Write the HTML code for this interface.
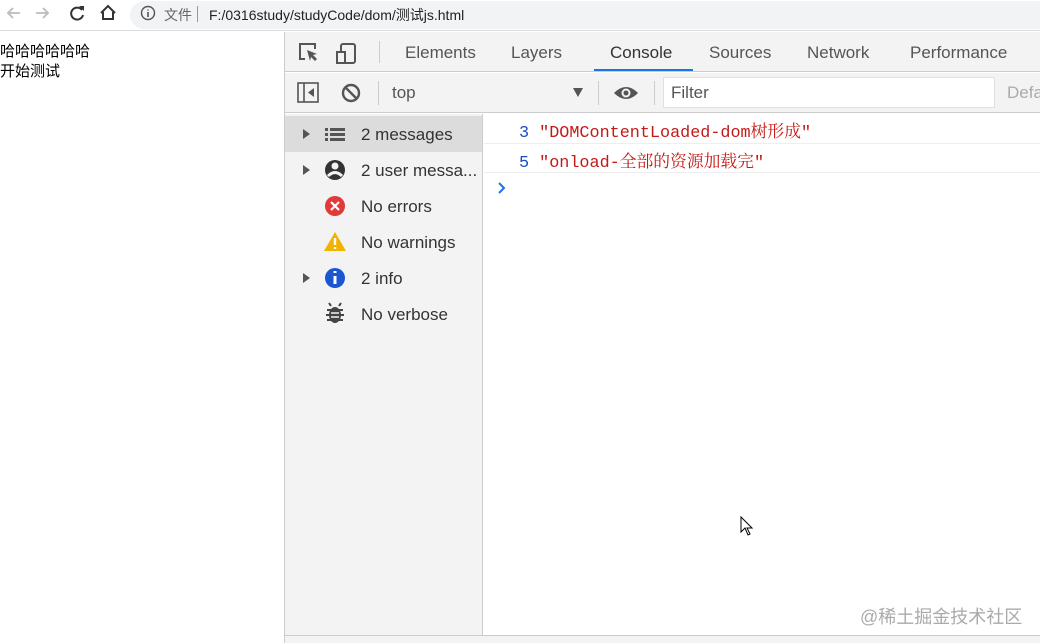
<!DOCTYPE html>
<html><head><meta charset="utf-8"><style>
*{margin:0;padding:0;box-sizing:border-box}
body{width:1040px;height:643px;overflow:hidden;background:#fff;font-family:"Liberation Sans","Noto Sans CJK SC",sans-serif;position:relative}
.a{position:absolute}
.t{font-size:17px;color:#333;white-space:nowrap}
.m{font-family:'Liberation Mono','Noto Serif CJK SC',monospace;font-size:16.8px;color:#c41a16;white-space:nowrap}
</style></head><body>
<div class="a" style="left:0;top:0;width:1040px;height:31px;background:#fff;border-bottom:1px solid #dadce0"></div>
<div class="a" style="left:130px;top:1px;width:910px;height:28px;background:#f1f3f4;border-radius:14px 0 0 14px"></div>
<svg class="a" style="left:0;top:0" width="130" height="30">
<path d="M20 13H8M13 8l-5 5 5 5" stroke="#bbb" stroke-width="1.8" fill="none"/>
<path d="M36 13h12M43 8l5 5-5 5" stroke="#bbb" stroke-width="1.8" fill="none"/>
<path d="M82 10a6 6 0 1 0 1 5" stroke="#333" stroke-width="2" fill="none"/><path d="M79 6h5v5z" fill="#333"/>
<path d="M101 13l7-7 7 7M103 12v7h10v-7" stroke="#333" stroke-width="2" fill="none"/>
</svg>
<svg class="a" style="left:140px;top:5px" width="16" height="16"><circle cx="8" cy="8" r="6.5" stroke="#555" stroke-width="1.4" fill="none"/><path d="M8 7v5M8 4.5v1" stroke="#555" stroke-width="1.6"/></svg>
<div class="a" style="left:164px;top:5px;font-size:14px;color:#666">文件</div>
<div class="a" style="left:197px;top:6px;width:1px;height:16px;background:#999"></div>
<div class="a" style="left:209px;top:5px;font-size:14px;color:#222">F:/0316study/studyCode/dom/测试js.html</div>
<div class="a" style="left:0;top:42px;font-size:15px;color:#000;line-height:20px">哈哈哈哈哈哈<br>开始测试</div>
<div class="a" style="left:284px;top:32px;width:756px;height:611px;background:#fff;border-left:1px solid #ccc"></div>
<div class="a" style="left:285px;top:32px;width:755px;height:40px;background:#f3f3f3;border-bottom:1px solid #ccc"></div>
<svg class="a" style="left:296px;top:40px" width="70" height="26">
<path d="M9 19H4V4h15v5" stroke="#555" stroke-width="2" fill="none"/><path d="M11 10l10 4-4 1 4 4-2 2-4-4-1 4z" fill="#555"/>
<rect x="45" y="4" width="14" height="19" rx="2" stroke="#555" stroke-width="2" fill="none"/><rect x="41" y="12" width="8" height="11" stroke="#555" stroke-width="2" fill="#f3f3f3"/>
</svg>
<div class="a" style="left:379px;top:41px;width:1px;height:22px;background:#ccc"></div>
<div class="a t" style="left:405px;top:43px;color:#555">Elements</div>
<div class="a t" style="left:511px;top:43px;color:#555">Layers</div>
<div class="a t" style="left:610px;top:43px;color:#333">Console</div>
<div class="a" style="left:594px;top:69px;width:99px;height:2px;background:#1a73e8"></div>
<div class="a t" style="left:709px;top:43px;color:#555">Sources</div>
<div class="a t" style="left:807px;top:43px;color:#555">Network</div>
<div class="a t" style="left:910px;top:43px;color:#555">Performance</div>
<div class="a" style="left:285px;top:73px;width:755px;height:40px;background:#f3f3f3;border-bottom:1px solid #ccc"></div>
<svg class="a" style="left:296px;top:81px" width="80" height="24">
<rect x="2" y="2" width="20" height="19" stroke="#555" stroke-width="1.6" fill="none"/><path d="M8 2v19" stroke="#555" stroke-width="1.6"/><path d="M18 7v9l-6-4.5z" fill="#555"/>
<circle cx="55" cy="12" r="8" stroke="#555" stroke-width="2.4" fill="none"/><path d="M49 6l12 12" stroke="#555" stroke-width="2.4"/>
</svg>
<div class="a" style="left:378px;top:81px;width:1px;height:24px;background:#ccc"></div>
<div class="a t" style="left:392px;top:83px;color:#555">top</div>
<div class="a" style="left:573px;top:88px;border-left:5px solid transparent;border-right:5px solid transparent;border-top:9px solid #555"></div>
<div class="a" style="left:598px;top:81px;width:1px;height:24px;background:#ccc"></div>
<svg class="a" style="left:613px;top:83px" width="26" height="20"><path d="M1 10Q13-2 25 10Q13 22 1 10z" fill="#555"/><circle cx="13" cy="10" r="4.5" fill="#f3f3f3"/><circle cx="13" cy="10" r="2.5" fill="#555"/></svg>
<div class="a" style="left:654px;top:81px;width:1px;height:24px;background:#ccc"></div>
<div class="a" style="left:663px;top:77px;width:332px;height:31px;background:#fff;border:1px solid #e0e0e0"></div>
<div class="a t" style="left:671px;top:83px;color:#555">Filter</div>
<div class="a t" style="left:1007px;top:83px;color:#aaa">Defa</div>
<div class="a" style="left:285px;top:114px;width:198px;height:521px;background:#f3f3f3;border-right:1px solid #ccc"></div>
<div class="a" style="left:285px;top:116px;width:197px;height:36px;background:#dcdcdc"></div>
<svg class="a" style="left:296px;top:116px" width="60" height="216">
<path d="M7 13l7 5-7 5z" fill="#555"/><path d="M7 49l7 5-7 5z" fill="#555"/><path d="M7 157l7 5-7 5z" fill="#555"/>
<g fill="#555"><rect x="29" y="12" width="3" height="3"/><rect x="34" y="12" width="15" height="3"/><rect x="29" y="17" width="3" height="3"/><rect x="34" y="17" width="15" height="3"/><rect x="29" y="22" width="3" height="3"/><rect x="34" y="22" width="15" height="3"/></g>
<circle cx="39" cy="54" r="10" fill="#333"/><circle cx="39" cy="50" r="3.5" fill="#f3f3f3"/><path d="M32 60q7-7 14 0" stroke="#f3f3f3" stroke-width="3" fill="none"/>
<circle cx="39" cy="90" r="10" fill="#e03a3a"/><path d="M35 86l8 8M43 86l-8 8" stroke="#fff" stroke-width="2.2"/>
<path d="M39 116l11 19H28z" fill="#f2b300"/><path d="M39 122v7M39 131v2" stroke="#fff" stroke-width="2.4"/>
<circle cx="39" cy="162" r="10" fill="#1a55d2"/><path d="M39 160v8M39 155v2" stroke="#fff" stroke-width="3"/>
<ellipse cx="39" cy="199" rx="6" ry="8" fill="#444"/><path d="M31 194h16M30 199h18M31 204h16M35 190l-2-3M43 190l2-3" stroke="#444" stroke-width="2"/><path d="M35 197h8M35 201h8" stroke="#f3f3f3" stroke-width="1.4"/>
</svg>
<div class="a t" style="left:361px;top:125px">2 messages</div>
<div class="a t" style="left:361px;top:161px">2 user messa...</div>
<div class="a t" style="left:361px;top:197px">No errors</div>
<div class="a t" style="left:361px;top:233px">No warnings</div>
<div class="a t" style="left:361px;top:269px">2 info</div>
<div class="a t" style="left:361px;top:305px">No verbose</div>
<div class="a" style="left:484px;top:143px;width:556px;height:1px;background:#eee"></div>
<div class="a" style="left:484px;top:172px;width:556px;height:1px;background:#eee"></div>
<div class="a m" style="left:519px;top:118px"><span style="color:#1a4fbf">3</span> "DOMContentLoaded-dom树形成"</div>
<div class="a m" style="left:519px;top:148px"><span style="color:#1a4fbf">5</span> "onload-全部的资源加载完"</div>
<svg class="a" style="left:496px;top:181px" width="12" height="14"><path d="M3 2l5 5-5 5" stroke="#1a73e8" stroke-width="2" fill="none"/></svg>
<svg class="a" style="left:739px;top:515px" width="16" height="22"><path d="M2 2v15l4-4 3 7 2-1-3-6h5z" fill="#fff" stroke="#000" stroke-width="1"/></svg>
<div class="a" style="left:860px;top:603px;font-size:18px;color:#aaa">@稀土掘金技术社区</div>
<div class="a" style="left:285px;top:635px;width:755px;height:8px;background:#f3f3f3;border-top:1px solid #ccc"></div>
</body></html>
